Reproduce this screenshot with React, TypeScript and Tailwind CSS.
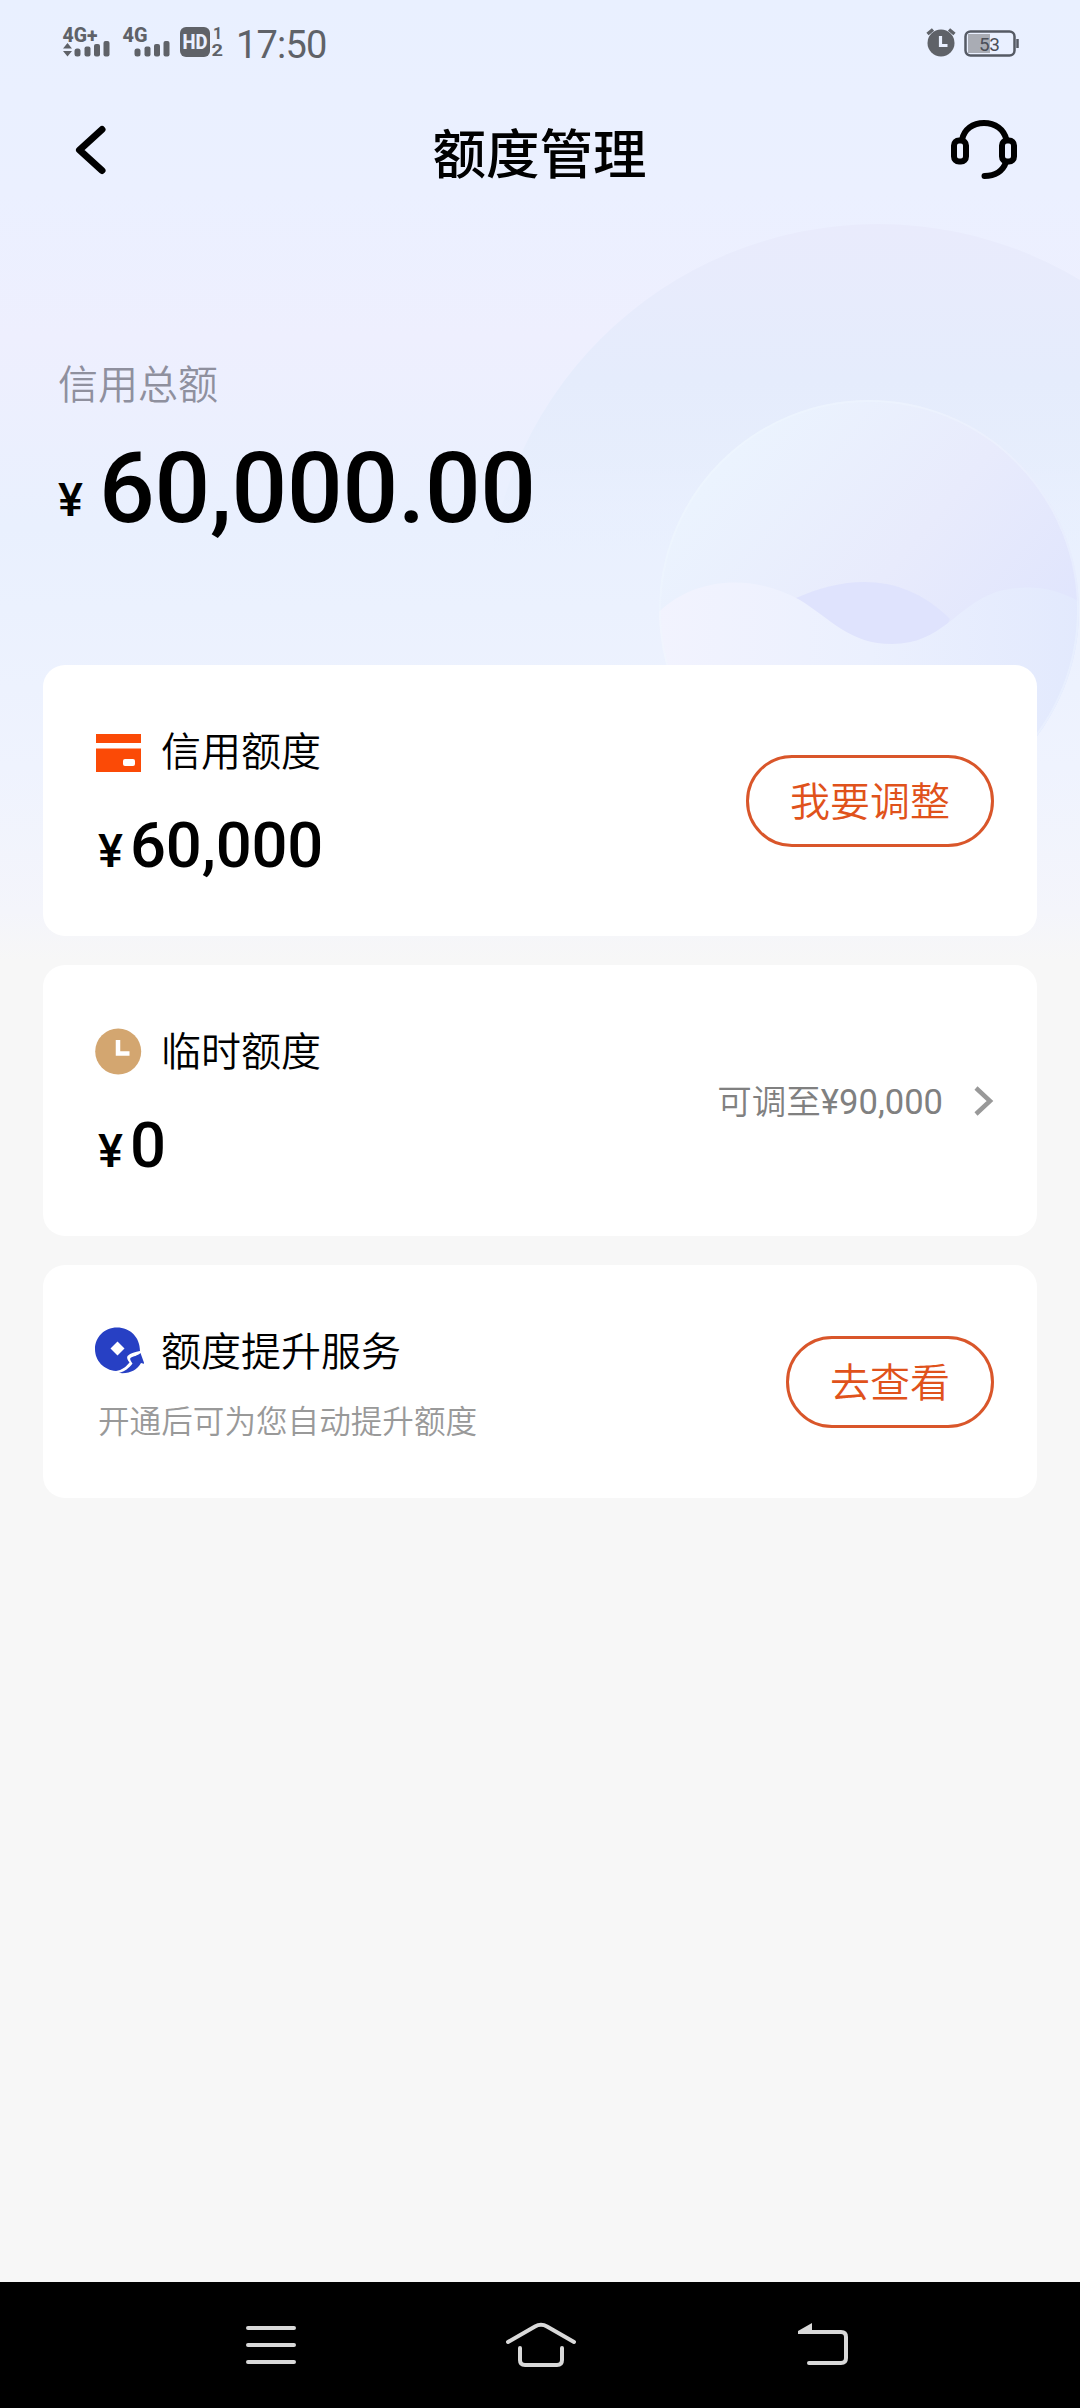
import type { ReactNode } from 'react'

function SignalIcon({ label, roaming }: { label: string; roaming?: boolean }) {
  return (
    <svg viewBox="0 0 50 32" className="h-8 w-[50px] overflow-visible" fill="#5f6268">
      <text
        x="0.500"
        y="16"
        fontFamily="Roboto"
        fontWeight="800"
        fontSize="20.500"
        textLength={roaming ? 35 : 25}
        lengthAdjust="spacingAndGlyphs"
      >
        {label}
      </text>
      {roaming && <path d="M1 22.500 5.500 17l4.500 5.500zM1 25h9l-4.500 5.500z" />}
      <rect x="12.500" y="22.500" width="6" height="8" rx="2.500" />
      <rect x="22.500" y="20.500" width="6" height="10" rx="2" />
      <rect x="32" y="18" width="6" height="12.500" rx="2" />
      <rect x="41.500" y="15" width="6" height="15.500" rx="2" />
    </svg>
  )
}

function StatusBar() {
  return (
    <div className="flex h-[84px] items-start justify-between pr-[60px] pl-[62px] pt-[26px]">
      <div className="flex items-start">
        <SignalIcon label="4G+" roaming />
        <div className="ml-[10px]">
          <SignalIcon label="4G" />
        </div>
        <svg viewBox="0 0 44 32" className="ml-2 h-8 w-11 overflow-visible" fill="#5f6268">
          <rect x="0" y="1" width="30" height="30" rx="6" />
          <text x="2.500" y="23" fontFamily="Roboto" fontWeight="800" fontSize="19.500" fill="#eaf0ff" textLength="25" lengthAdjust="spacingAndGlyphs">
            HD
          </text>
          <text x="33" y="13" fontFamily="Roboto" fontWeight="700" fontSize="16">
            1
          </text>
          <text x="31.500" y="30" fontFamily="Roboto" fontWeight="700" fontSize="16" textLength="11.500" lengthAdjust="spacingAndGlyphs">
            2
          </text>
        </svg>
        <span className="ml-[12px] font-['Roboto',sans-serif] text-[38px] leading-[38px] tracking-[-0.8px] text-[#5f6268]">
          17:50
        </span>
      </div>
      <div className="flex items-start">
        <svg viewBox="0 0 30 32" className="h-8 w-[30px]">
          <path d="M1.500 8 7 3.500M23 3.500 28.500 8" stroke="#5f6268" strokeWidth="3.500" fill="none" />
          <circle cx="15" cy="17" r="13.500" fill="#5f6268" />
          <path d="M14.500 10v9.500h7" stroke="#eaf0ff" strokeWidth="3.200" fill="none" />
        </svg>
        <svg viewBox="0 0 56 32" className="ml-[8px] h-8 w-[56px]">
          <rect x="1.500" y="5.500" width="49" height="24" rx="5" fill="none" stroke="#555a64" strokeWidth="2.500" />
          <path d="M4 8h22v19H4z" fill="#a9acb4" />
          <path d="M53.500 13v9" stroke="#555a64" strokeWidth="2.500" />
          <text x="15" y="24.500" fontFamily="Roboto" fontSize="19" fill="#4b4f58" textLength="21">
            53
          </text>
        </svg>
      </div>
    </div>
  )
}

function TitleBar() {
  return (
    <div className="flex h-[132px] items-center justify-between pr-[62px] pl-[74px]">
      <svg viewBox="0 0 34 50" className="h-[50px] w-[34px]">
        <path d="M28 4.500 5.500 25 28 45.500" stroke="#000" strokeWidth="7" strokeLinecap="round" strokeLinejoin="round" fill="none" />
      </svg>
      <h1 className="mt-[2px] ml-[21px] text-[53.500px] leading-[60px] font-medium text-black">额度管理</h1>
      <svg viewBox="0 0 68 62" className="h-[62px] w-[68px]" fill="none" stroke="#000" strokeWidth="6" strokeLinecap="round">
        <path d="M12 21C14 10 23 4 34 4s20 6 22.500 17" />
        <rect x="4" y="21.500" width="12" height="21" rx="5" />
        <rect x="52" y="21.500" width="12" height="21" rx="5" />
        <path d="M56 43C53 52 45 57 34.500 57" />
      </svg>
    </div>
  )
}

function Backdrop() {
  return (
    <svg viewBox="0 0 1080 960" className="absolute top-0 left-0 h-[960px] w-[1080px]">
      <defs>
        <linearGradient id="sky" x1="0" y1="0" x2="0" y2="1">
          <stop offset="0" stopColor="#e9f0ff" />
          <stop offset="0.200" stopColor="#ebf0ff" />
          <stop offset="0.350" stopColor="#eeeffe" />
          <stop offset="0.550" stopColor="#e9f0fe" />
          <stop offset="0.800" stopColor="#eff3fe" />
          <stop offset="0.950" stopColor="#f4f5fb" />
          <stop offset="1" stopColor="#f7f7f7" />
        </linearGradient>
        <linearGradient id="halo" x1="0" y1="0" x2="0" y2="1">
          <stop offset="0" stopColor="#e9ebfc" />
          <stop offset="0.200" stopColor="#e5ecfc" />
          <stop offset="0.300" stopColor="#e5edfc" stopOpacity="0.800" />
          <stop offset="0.420" stopColor="#e8effe" stopOpacity="0" />
        </linearGradient>
        <linearGradient id="orb" x1="0.200" y1="0.100" x2="0.900" y2="0.700">
          <stop offset="0" stopColor="#ebf3fe" />
          <stop offset="0.500" stopColor="#e8ebfc" />
          <stop offset="1" stopColor="#dfe4fd" />
        </linearGradient>
        <linearGradient id="wave" x1="0" y1="0" x2="1" y2="0">
          <stop offset="0" stopColor="#f2f3fe" />
          <stop offset="0.500" stopColor="#ebf0fe" />
          <stop offset="1" stopColor="#e2e9fd" />
        </linearGradient>
        <clipPath id="orbClip">
          <circle cx="869" cy="610" r="210" />
        </clipPath>
      </defs>
      <rect width="1080" height="960" fill="url(#sky)" />
      <circle cx="878" cy="616" r="392" fill="url(#halo)" />
      <circle cx="869" cy="610" r="210" fill="url(#orb)" />
      <g clipPath="url(#orbClip)">
        <path d="M796 598C850 574 905 574 950 619L930 660H830z" fill="#dfe3fd" />
        <path d="M655 616C690 578 750 572 800 600c32 20 50 44 92 44 50 0 64-38 104-52 30-8 60-6 90 14v240H655z" fill="url(#wave)" />
      </g>
      <circle cx="869" cy="610" r="209" fill="none" stroke="#f1f7ff" strokeWidth="2" strokeOpacity="0.400" />
    </svg>
  )
}

function CardIcon() {
  return (
    <svg viewBox="0 0 50 48" className="h-12 w-[50px]">
      <path d="M2 7h45v9H2zM2 21.500h45V45H2z" fill="#fb4a06" />
      <rect x="29" y="32" width="12" height="7" rx="2" fill="#fff" />
    </svg>
  )
}

function ClockIcon() {
  return (
    <svg viewBox="0 0 50 48" className="h-12 w-[50px]">
      <circle cx="24.200" cy="24.500" r="23" fill="#d3a670" />
      <path d="M24 13v13.500h11.500" stroke="#fff" strokeWidth="4.500" fill="none" />
    </svg>
  )
}

function BoostIcon() {
  return (
    <svg viewBox="0 0 50 48" className="h-12 w-[50px]">
      <path d="M23 1.500C10 1.500 1 11.500 1 23c0 12 9 21 21 22 6-1 10-4 13.500-8.500-2-2.500-3-4.500-2-6.500 3-3 8-4 12.500-5C46 11 36 1.500 23 1.500z" fill="#2740c4" />
      <path d="M25 47c6-1.500 10-5 13.500-9.500-1.500-2.500-3-4-2-5.500 3-2 7-2 10-5l4 11-3.500-1c-4 7-11 11-22 10z" fill="#2740c4" />
      <path d="M23.500 15.500l7 7-7 7-7-7z" fill="#fff" />
    </svg>
  )
}

function PillButton({ children }: { children: ReactNode }) {
  return (
    <button className="flex h-[92px] items-center rounded-full border-[3px] border-[#d9562a] px-[41px] pb-[4px] text-[40px] leading-[40px] font-[350] text-[#e0521b]">
      {children}
    </button>
  )
}

function LimitCard({ icon, title, amount, action }: { icon: ReactNode; title: string; amount: string; action: ReactNode }) {
  return (
    <section className="flex h-[271px] items-center justify-between rounded-[22px] bg-white pr-[43px] pl-[51px]">
      <div>
        <div className="flex items-center">
          {icon}
          <h2 className="-mt-[4px] ml-[17px] text-[40px] leading-[48px] font-[350] text-black">{title}</h2>
        </div>
        <div className="mt-[40px] -mb-[6px] ml-[4px] flex items-baseline font-['Roboto',sans-serif] font-medium text-black">
          <span className="w-[32px] text-[47px] leading-[60px]">¥</span>
          <span className="text-[63.400px] leading-[60px] tracking-[-0.200px]">{amount}</span>
        </div>
      </div>
      {action}
    </section>
  )
}

function NavBar() {
  return (
    <nav className="flex h-[126px] items-center bg-black pl-[245px]">
      <svg viewBox="0 0 52 44" className="h-[44px] w-[52px]" stroke="#d9d9d9" strokeWidth="4" strokeLinecap="round">
        <path d="M3 5h46M3 22h46M3 39h46" />
      </svg>
      <svg viewBox="0 0 72 46" className="ml-[208px] h-[46px] w-[72px]" fill="none" stroke="#d9d9d9" strokeWidth="4" strokeLinecap="round">
        <path d="M3 20 30 4.500Q36 1 42 4.500L69 20" />
        <path d="M15 26v12q0 5 5 5h32q5 0 5-5V26" />
      </svg>
      <svg viewBox="0 0 54 46" className="ml-[220px] h-[46px] w-[54px]" fill="none" stroke="#d9d9d9" strokeWidth="4" strokeLinecap="round">
        <path d="M6 10h38q5 0 5 5v21q0 5-5 5H12" />
        <path d="M1 12V9L15 1v11z" fill="#d9d9d9" stroke="none" />
      </svg>
    </nav>
  )
}

export default function App() {
  return (
    <div className="relative flex h-[2408px] w-[1080px] flex-col overflow-hidden bg-[#f7f7f7] font-['Noto_Sans_CJK_SC',sans-serif]">
      <Backdrop />
      <header className="relative h-[665px]">
        <StatusBar />
        <TitleBar />
        <div className="mt-[142px] pl-[58px]">
          <p className="text-[40px] leading-[48px] font-[350] text-[#8f909e]">信用总额</p>
          <div className="mt-[33px] flex items-baseline font-['Roboto',sans-serif] font-medium text-black">
            <span className="w-[41px] pb-[6px] text-[47px] leading-[60px]">
              <span className="relative -top-[6px]">¥</span>
            </span>
            <span className="text-[98px] leading-[100px] tracking-[-0.250px]">60,000.00</span>
          </div>
        </div>
      </header>

      <main className="relative flex flex-1 flex-col gap-[29px] px-[43px]">
        <LimitCard icon={<CardIcon />} title="信用额度" amount="60,000" action={<PillButton>我要调整</PillButton>} />
        <LimitCard
          icon={<ClockIcon />}
          title="临时额度"
          amount="0"
          action={
            <div className="flex items-center text-[34.600px] leading-[40px] text-[#808080]">
              <span className="font-[350]">
                可调至<span className="font-['Roboto',sans-serif] font-normal">¥90,000</span>
              </span>
              <svg viewBox="0 0 22 32" className="ml-[29px] h-8 w-[22px]" fill="none" stroke="#999" strokeWidth="4.500">
                <path d="M4 3l14 13L4 29" />
              </svg>
            </div>
          }
        />
        <section className="flex h-[233px] items-center justify-between rounded-[22px] bg-white pr-[43px] pl-[51px]">
          <div>
            <div className="flex items-center">
              <BoostIcon />
              <h2 className="-mt-[2px] ml-[17px] text-[40px] leading-[48px] font-[350] text-black">额度提升服务</h2>
            </div>
            <p className="mt-[25px] -mb-[1px] ml-[4px] text-[31.600px] leading-[40px] font-[350] text-[#999]">开通后可为您自动提升额度</p>
          </div>
          <PillButton>去查看</PillButton>
        </section>
      </main>

      <NavBar />
    </div>
  )
}
